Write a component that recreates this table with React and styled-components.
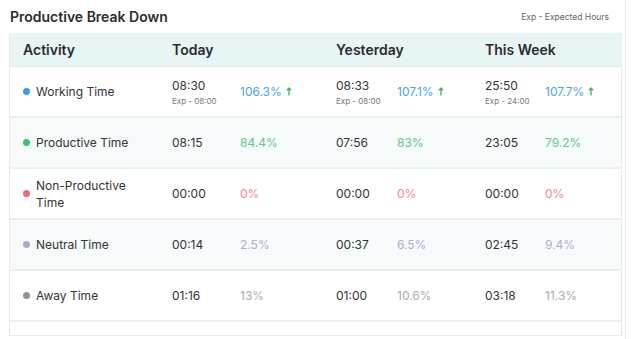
import React from 'react'
import styled, { createGlobalStyle } from 'styled-components'

const Global = createGlobalStyle`
  body {
    margin: 0;
    background: #fff;
    font-family: Inter, 'Open Sans', sans-serif;
    color: #2f2f33;
  }
`

const Card = styled.div`
  width: 626px;
  height: 339px;
  box-sizing: border-box;
  border-right: 1px solid #ececee;
  display: flex;
  flex-direction: column;
`

const TitleBar = styled.div`
  height: 33px;
  display: flex;
  align-items: center;
  justify-content: space-between;
  padding: 0 16px 0 10px;
  h2 {
    margin: 0;
    font-size: 14px;
    font-weight: 600;
    color: #2c2c30;
  }
  span {
    font-size: 8.5px;
    color: #666;
  }
`

const Table = styled.div`
  margin-left: 9px;
  width: 613px;
  box-sizing: border-box;
  border: 1px solid #e8eaec;
  border-top: none;
`

const Grid = styled.div`
  display: grid;
  grid-template-columns: 162px 68px 96px 61px 88px 60px 1fr;
  align-items: center;
`

const Head = styled(Grid)`
  height: 33px;
  background: #e7f5f5;
  border-bottom: 1px solid #dcebec;
  font-size: 14px;
  font-weight: 600;
  color: #2c2c30;
`

const HeadCell = styled.div`
  grid-column: span ${(p) => p.$span || 1};
  padding-left: ${(p) => (p.$first ? '13px' : '0')};
`

const Row = styled(Grid)`
  height: 49px;
  border-bottom: 2px solid #eceef0;
  background: ${(p) => (p.$shade ? '#f6fafb' : '#fff')};
  font-size: 12px;
`

const Activity = styled.div`
  display: flex;
  align-items: center;
  gap: 6px;
  padding-left: 13px;
  padding-right: 30px;
  line-height: 17px;
  color: #333;
`

const Dot = styled.i`
  flex: none;
  width: 7px;
  height: 7px;
  border-radius: 50%;
  background: ${(p) => p.$c};
`

const Time = styled.div`
  color: #333;
  small {
    display: block;
    margin-top: 3px;
    font-size: 8px;
    color: #777;
  }
`

const Pct = styled.div`
  color: ${(p) => p.$c};
  display: flex;
  align-items: center;
  gap: 4px;
`

const Filler = styled.div`
  height: 13px;
`

const Up = () => (
  <svg width="6" height="9" viewBox="0 0 6 9">
    <path d="M3 8.5V1.2M0.8 3.4L3 1l2.2 2.4" fill="none" stroke="#3bb25c" strokeWidth="1.3" />
  </svg>
)

const rows = [
  {
    name: 'Working Time', dot: '#3f9de8', pc: '#4aa3ea', up: true,
    cells: [['08:30', '106.3%', '08:00'], ['08:33', '107.1%', '08:00'], ['25:50', '107.7%', '24:00']],
  },
  {
    name: 'Productive Time', dot: '#3fc26b', pc: '#5dcc80',
    cells: [['08:15', '84.4%'], ['07:56', '83%'], ['23:05', '79.2%']],
  },
  {
    name: 'Non-Productive Time', dot: '#ef6a6e', pc: '#f2898b',
    cells: [['00:00', '0%'], ['00:00', '0%'], ['00:00', '0%']],
  },
  {
    name: 'Neutral Time', dot: '#a6a8d8', pc: '#a9aed8',
    cells: [['00:14', '2.5%'], ['00:37', '6.5%'], ['02:45', '9.4%']],
  },
  {
    name: 'Away Time', dot: '#9a8f90', pc: '#b1a9aa',
    cells: [['01:16', '13%'], ['01:00', '10.6%'], ['03:18', '11.3%']],
  },
]

export default function App() {
  return (
    <Card>
      <Global />
      <TitleBar>
        <h2>Productive Break Down</h2>
        <span>Exp - Expected Hours</span>
      </TitleBar>
      <Table>
        <Head>
          <HeadCell $first>Activity</HeadCell>
          <HeadCell $span={2}>Today</HeadCell>
          <HeadCell $span={2}>Yesterday</HeadCell>
          <HeadCell $span={2}>This Week</HeadCell>
        </Head>
        {rows.map((r, i) => (
          <Row key={r.name} $shade={i % 2 === 1}>
            <Activity>
              <Dot $c={r.dot} />
              {r.name}
            </Activity>
            {r.cells.map(([t, p, exp], j) => (
              <React.Fragment key={j}>
                <Time>
                  {t}
                  {exp && <small>Exp - {exp}</small>}
                </Time>
                <Pct $c={r.pc}>
                  {p}
                  {r.up && <Up />}
                </Pct>
              </React.Fragment>
            ))}
          </Row>
        ))}
        <Filler />
      </Table>
    </Card>
  )
}
